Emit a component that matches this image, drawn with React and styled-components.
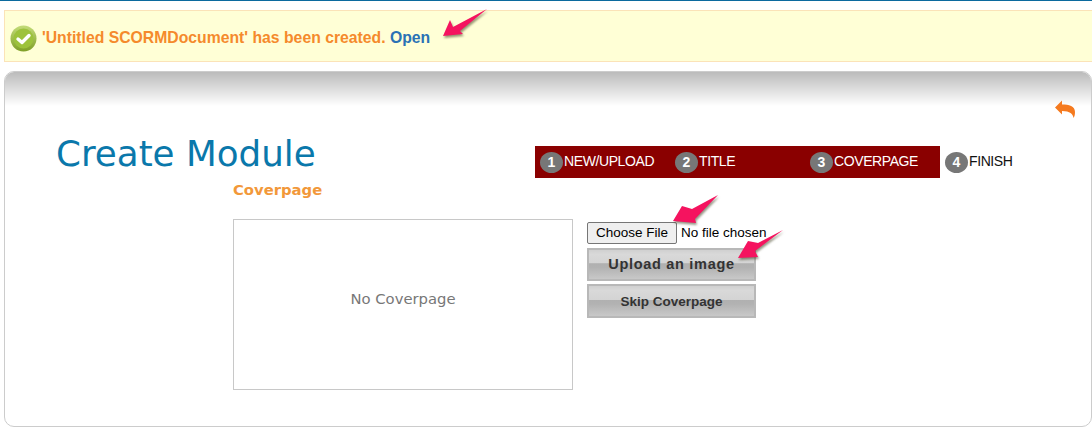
import React from "react"
import styled, { createGlobalStyle } from "styled-components"

const steps = [
  { label: "NEW/UPLOAD", active: true },
  { label: "TITLE", active: true },
  { label: "COVERPAGE", active: true },
  { label: "FINISH", active: false },
]

const arrows = [
  { left: 440, top: 5, points: "3,30 10,14 13,21 47,3 20,25 23,28" },
  { left: 670, top: 191, points: "3,29 12,14 22,17 48,3 25,27 26,31" },
  { left: 735, top: 226, points: "3,31 13,14 23,16 48,3 20,24 23,30" },
]

const App = () => {
  return (
    <Page>
      <GlobalStyle />
      <Notice>
        <svg width="27" height="27" viewBox="0 0 27 27">
          <defs>
            <linearGradient id="okFill" x1="0" y1="0" x2="0" y2="1">
              <stop offset="0" stopColor="#c3dc78" />
              <stop offset="1" stopColor="#7f9f27" />
            </linearGradient>
          </defs>
          <circle cx="13.5" cy="13.5" r="13" fill="url(#okFill)" />
          <circle cx="13.5" cy="13.5" r="10" fill="#9dc23c" />
          <path
            d="M8 14l4 3.5 7-7"
            fill="none"
            stroke="#fff"
            strokeWidth="3.4"
            strokeLinecap="round"
            strokeLinejoin="round"
          />
        </svg>
        <NoticeText>
          'Untitled SCORMDocument' has been created. <NoticeLink href="#">Open</NoticeLink>
        </NoticeText>
      </Notice>

      <Panel>
        <PanelBand>
          <BackIcon viewBox="0 0 22 20">
            <path d="M0 7.5L7 .5v4c7 0 13 1.500 13 7.500 0 2.500-.5 4.500-1.500 6-.5-4-3.500-7-11.500-7v3.500z" />
          </BackIcon>
        </PanelBand>
        <Header>
          <Title>Create Module</Title>
          <Steps>
            {steps.map((item, index) => {
              return (
                <Step key={index} $active={item.active}>
                  <StepNumber>{index + 1}</StepNumber>
                  {item.label}
                </Step>
              )
            })}
          </Steps>
        </Header>
        <Content>
          <SectionTitle>Coverpage</SectionTitle>
          <Columns>
            <Preview>No Coverpage</Preview>
            <Actions>
              <FileInput type="file" />
              <GlossButton $height={33} $size={14.5} $spacing={0.7} $lift={2}>
                Upload an image
              </GlossButton>
              <GlossButton $height={34} $size={13.5} $spacing={0} $lift={0}>
                Skip Coverpage
              </GlossButton>
            </Actions>
          </Columns>
        </Content>
      </Panel>

      {arrows.map((item, index) => {
        return (
          <Arrow key={index} $left={item.left} $top={item.top} viewBox="0 0 50 36">
            <polygon points={item.points} fill="#f5135f" />
          </Arrow>
        )
      })}
    </Page>
  )
}

export default App

const GlobalStyle = createGlobalStyle`
  html, body {
    margin: 0;
    padding: 0;
    background: #fff;
    overflow: hidden;
  }
`

const Page = styled.div`
  position: relative;
  width: 1092px;
  height: 428px;
  border-top: 1px solid #0b6a9e;
  box-sizing: border-box;
  font-family: "Liberation Sans", Arial, sans-serif;
`

const Notice = styled.div`
  margin: 9px 0 9px 4px;
  height: 52px;
  box-sizing: border-box;
  padding: 4px 0 0 5px;
  background: #ffffd6;
  border: 1px solid #fbe3b8;
  border-right: 0;
  display: flex;
  align-items: center;
  gap: 5px;
`

const NoticeText = styled.span`
  color: #f58a2c;
  font-size: 15.75px;
  font-weight: bold;
`

const NoticeLink = styled.a`
  color: #2a72b5;
  text-decoration: none;
`

const Panel = styled.div`
  margin-left: 4px;
  height: 356px;
  box-sizing: border-box;
  border: 1px solid #ccc;
  border-radius: 10px;
  overflow: hidden;
`

const PanelBand = styled.div`
  height: 34px;
  background: linear-gradient(#bbb, #fff);
  position: relative;
`

const BackIcon = styled.svg`
  position: absolute;
  top: 28px;
  right: 14px;
  width: 22px;
  height: 20px;
  fill: #f57a1f;
`

const Header = styled.div`
  display: flex;
  align-items: flex-start;
  padding: 40px 0 0 51px;
  height: 35px;
`

const Title = styled.h1`
  margin: -14px 0 0;
  width: 479px;
  color: #0a78ab;
  font-family: "DejaVu Sans", Verdana, sans-serif;
  font-size: 35.7px;
  font-weight: normal;
  line-height: 44px;
  white-space: nowrap;
`

const Steps = styled.div`
  display: flex;
`

const Step = styled.div`
  width: 135px;
  height: 32px;
  box-sizing: border-box;
  padding: 0 0 2px 5px;
  display: flex;
  align-items: center;
  background: ${(props) => (props.$active ? "#8a0000" : "transparent")};
  color: ${(props) => (props.$active ? "#fff" : "#111")};
  font-size: 14px;
  letter-spacing: -0.4px;
`

const StepNumber = styled.span`
  width: 23px;
  height: 21px;
  border-radius: 50%;
  background: #777;
  color: #fff;
  font-size: 14px;
  font-weight: bold;
  line-height: 21px;
  text-align: center;
  letter-spacing: 0;
  margin: 2px 1px 0 0;
`

const Content = styled.div`
  padding: 0 0 0 228px;
`

const SectionTitle = styled.div`
  color: #f2983a;
  font-family: "DejaVu Sans", Verdana, sans-serif;
  font-size: 14.8px;
  font-weight: bold;
  line-height: 18px;
  margin-bottom: 20px;
`

const Columns = styled.div`
  display: flex;
  gap: 14px;
`

const Preview = styled.div`
  width: 340px;
  height: 171px;
  box-sizing: border-box;
  border: 1px solid #c8c8c8;
  padding-bottom: 12px;
  display: flex;
  align-items: center;
  justify-content: center;
  color: #777;
  font-family: "DejaVu Sans", Verdana, sans-serif;
  font-size: 14.8px;
`

const Actions = styled.div`
  display: flex;
  flex-direction: column;
  align-items: flex-start;
  padding-top: 3px;
`

const FileInput = styled.input`
  font-family: "Liberation Sans", Arial, sans-serif;
  font-size: 13.5px;
  height: 22px;
  width: 190px;
  margin-bottom: 4px;

  &::file-selector-button {
    width: 90px;
    height: 22px;
    margin-right: 4px;
    padding: 0 0 2px;
    font: inherit;
    background: #efefef;
    border: 1px solid #767676;
    border-radius: 2px;
  }
`

const GlossButton = styled.button`
  width: 169px;
  height: ${(props) => props.$height}px;
  box-sizing: border-box;
  margin: 0 0 3px;
  padding: 0 0 ${(props) => props.$lift}px;
  border: 2px solid #b8b8b8;
  background: linear-gradient(#d0d0d0 0%, #d9d9d9 15%, #d4d4d4 45%, #b0b0b0 47%, #b2b2b2 60%, #c8c8c8 100%);
  color: #333;
  font-family: "Liberation Sans", Arial, sans-serif;
  font-size: ${(props) => props.$size}px;
  font-weight: bold;
  letter-spacing: ${(props) => props.$spacing}px;
`

const Arrow = styled.svg`
  position: absolute;
  left: ${(props) => props.$left}px;
  top: ${(props) => props.$top}px;
  width: 50px;
  height: 36px;
  filter: drop-shadow(1px 2px 1px rgba(60, 60, 30, 0.55));
`
